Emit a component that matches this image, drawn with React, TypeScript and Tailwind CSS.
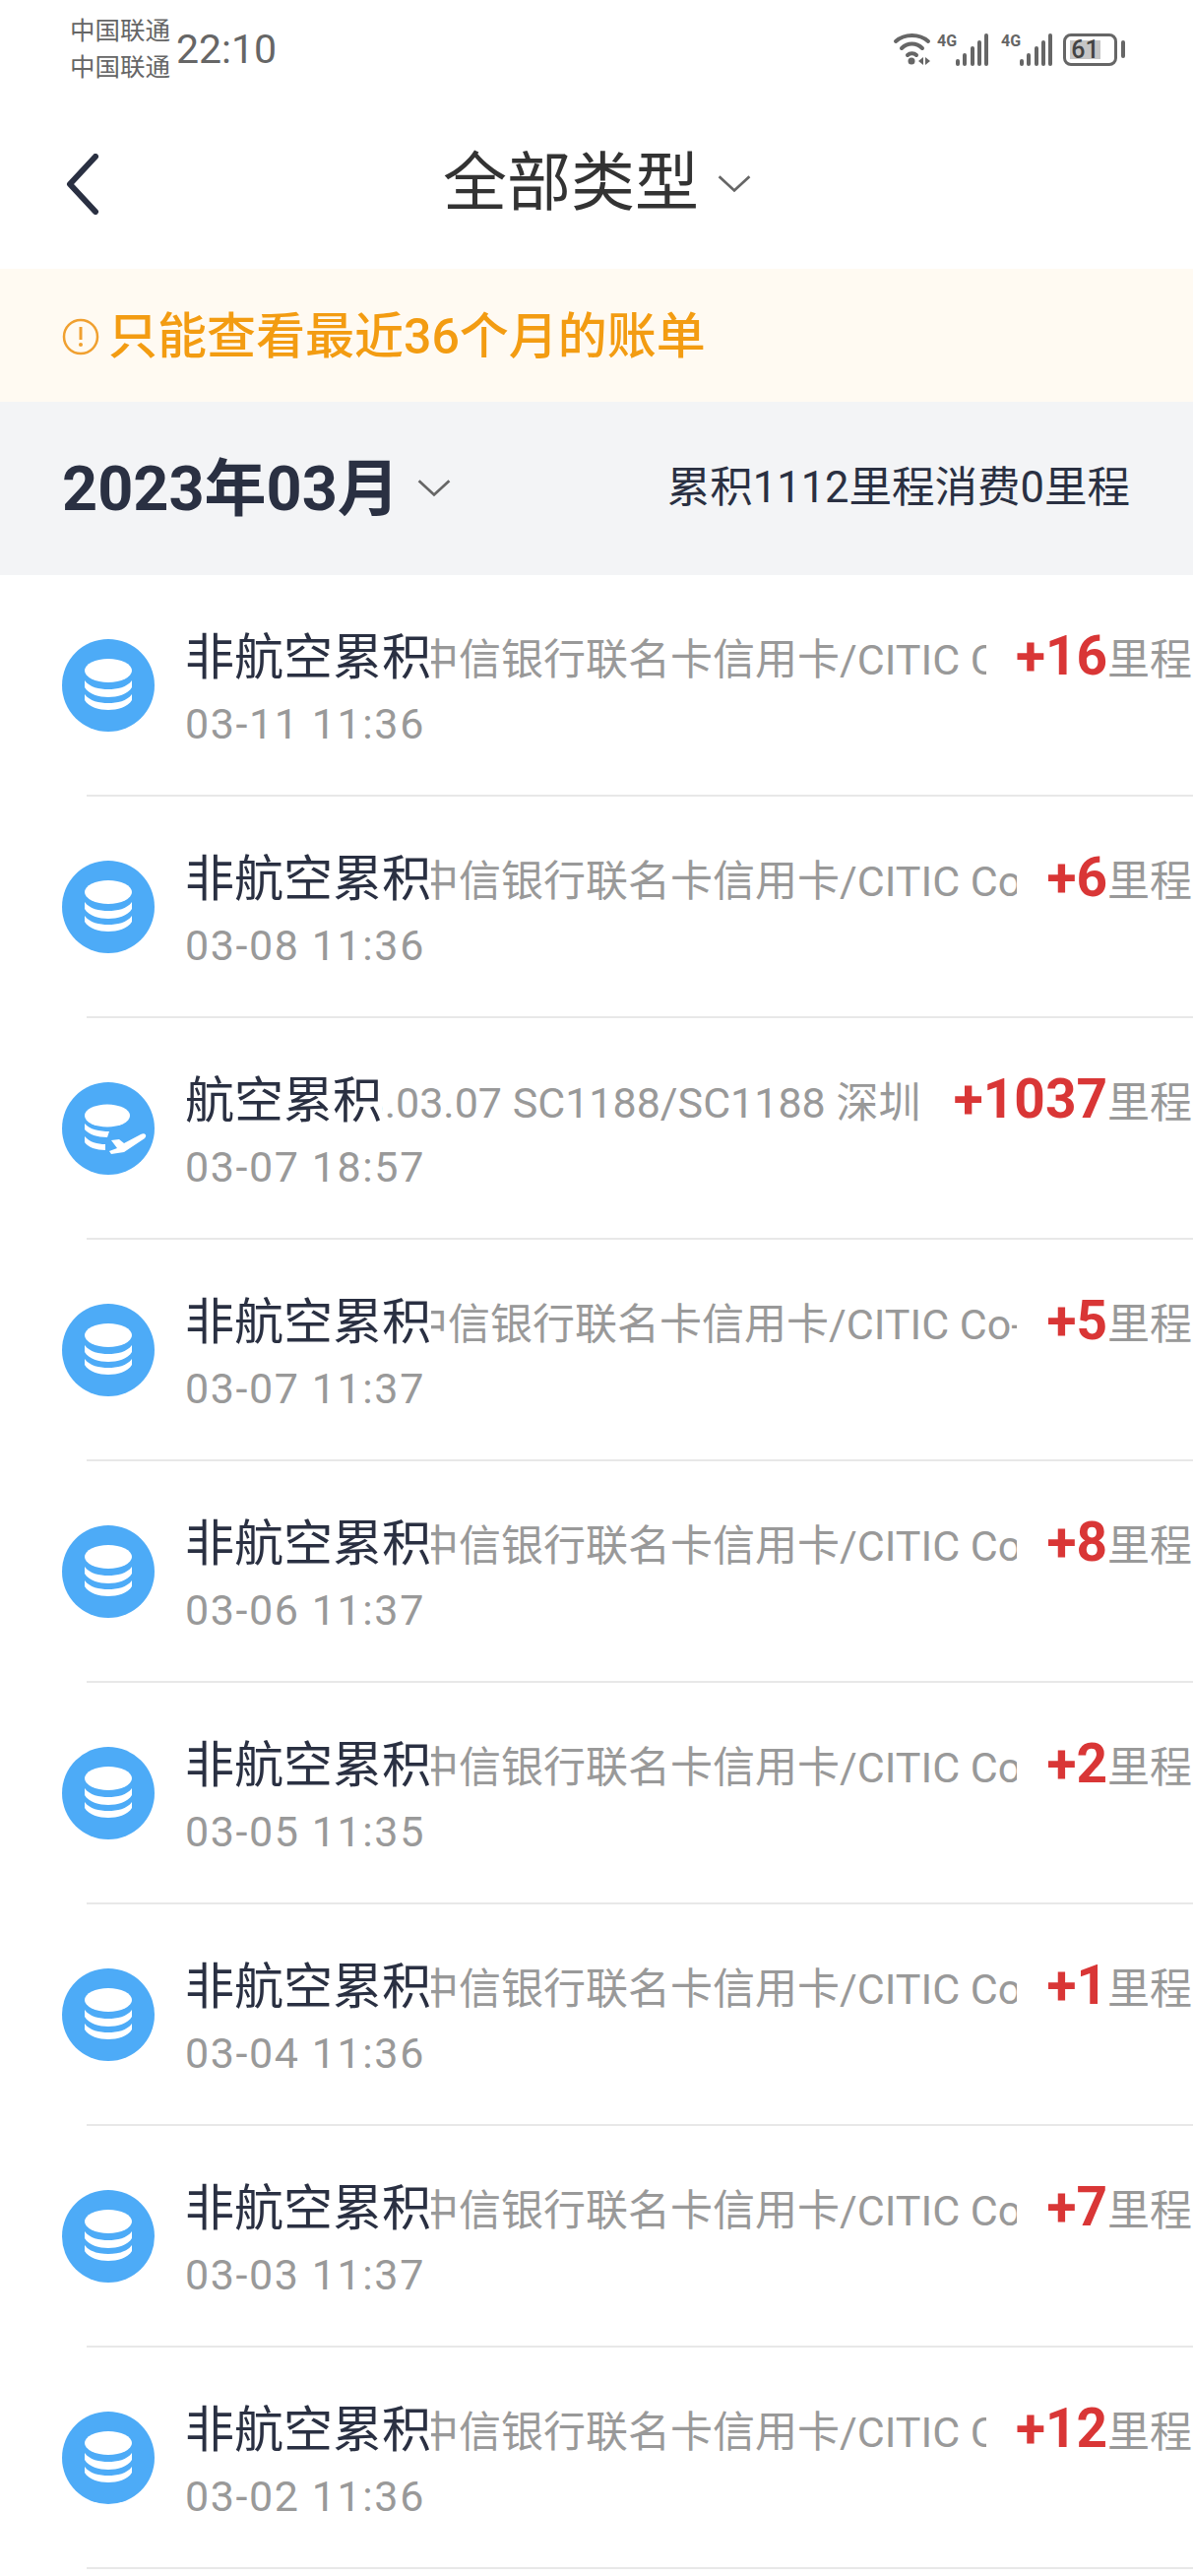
const font = { fontFamily: "Roboto, 'Noto Sans CJK SC', sans-serif" }

type Row = {
  title: string
  detail: string
  shift: number
  amount: string
  time: string
  flight?: boolean
}

const card = "中信银行联名卡信用卡/CITIC Co-branded Credit Card"

const rows: Row[] = [
  { title: "非航空累积", detail: card, shift: -15, amount: "+16", time: "03-11 11:36" },
  { title: "非航空累积", detail: card, shift: -15, amount: "+6", time: "03-08 11:36" },
  { title: "航空累积", detail: "2023.03.07 SC1188/SC1188 深圳 北京首都", shift: -94, amount: "+1037", time: "03-07 18:57", flight: true },
  { title: "非航空累积", detail: card, shift: -26, amount: "+5", time: "03-07 11:37" },
  { title: "非航空累积", detail: card, shift: -15, amount: "+8", time: "03-06 11:37" },
  { title: "非航空累积", detail: card, shift: -15, amount: "+2", time: "03-05 11:35" },
  { title: "非航空累积", detail: card, shift: -15, amount: "+1", time: "03-04 11:36" },
  { title: "非航空累积", detail: card, shift: -15, amount: "+7", time: "03-03 11:37" },
  { title: "非航空累积", detail: card, shift: -15, amount: "+12", time: "03-02 11:36" },
]

function Wifi() {
  return (
    <svg width="40" height="34" viewBox="0 0 40 34" fill="none" className="shrink-0">
      <path d="M3 9C12 1 27 1 36 9" stroke="#666" strokeWidth="4" strokeLinecap="round" />
      <path d="M9 16C15 10 24 10 30 16" stroke="#666" strokeWidth="4" strokeLinecap="round" />
      <path d="M15 23C17.500 20.500 21.500 20.500 24 23" stroke="#666" strokeWidth="4" strokeLinecap="round" />
      <circle cx="19" cy="29" r="3.500" fill="#666" />
      <path d="M31 25V33L26 29Z M33 25V33L38 29Z" fill="#666" />
    </svg>
  )
}

function Signal() {
  return (
    <div className="flex items-start shrink-0">
      <span className="text-[16px] leading-[16px] font-bold text-[#666] w-[19px]" style={font}>4G</span>
      <svg width="34" height="33" viewBox="0 0 34 33" fill="#666">
        <rect x="0" y="26" width="4" height="7" rx="2" />
        <rect x="7" y="20" width="4" height="13" rx="2" />
        <rect x="15" y="13" width="4" height="20" rx="2" />
        <rect x="22" y="7" width="4" height="26" rx="2" />
        <rect x="29" y="0" width="4" height="33" rx="2" />
      </svg>
    </div>
  )
}

function Battery() {
  return (
    <div className="flex items-center gap-[4px] shrink-0">
      <div className="w-[55px] h-[33px] border-[3px] border-[#666] rounded-[8px] p-[4px] flex">
        <div className="w-[31px] bg-[#c6c6c6] flex items-center justify-center">
          <span className="text-[25px] leading-none text-[#444] font-medium" style={font}>61</span>
        </div>
      </div>
      <div className="w-[4px] h-[18px] rounded-full bg-[#666]" />
    </div>
  )
}

function StatusBar() {
  return (
    <div className="h-[100px] flex items-center pl-[71px] pr-[69px]">
      <div className="w-[108px] flex flex-col text-[25.500px] leading-[37px] text-[#666]" style={font}>
        <span>中国联通</span>
        <span>中国联通</span>
      </div>
      <span className="text-[41px] leading-none text-[#666]" style={font}>22:10</span>
      <div className="ml-auto flex items-center">
        <Wifi />
        <div className="ml-[5px] flex gap-[12px]">
          <Signal />
          <Signal />
        </div>
        <div className="ml-[10px]">
          <Battery />
        </div>
      </div>
    </div>
  )
}

function Chevron({ color, width }: { color: string; width: number }) {
  return (
    <svg width={width} height={width * 0.55} viewBox="0 0 32 18" fill="none">
      <path d="M2 2L16 15L30 2" stroke={color} strokeWidth="2.500" />
    </svg>
  )
}

function Header() {
  return (
    <div className="relative h-[173px] flex items-center justify-center">
      <svg width="36" height="62" viewBox="0 0 36 62" fill="none" className="absolute left-[66px] top-[56px]">
        <path d="M31 3L5 31L31 59" stroke="#2a3042" strokeWidth="6" strokeLinecap="round" strokeLinejoin="round" />
      </svg>
      <div className="flex items-center gap-[18px] pl-[2px]">
        <span className="text-[65px] leading-none text-[#333]" style={font}>全部类型</span>
        <Chevron color="#666" width={36} />
      </div>
    </div>
  )
}

function Notice() {
  return (
    <div className="h-[135px] bg-[#fffaf2] flex items-center pl-[63px] pt-[3px] gap-[9px]">
      <svg width="38" height="38" viewBox="0 0 38 38" fill="none" className="shrink-0">
        <circle cx="19" cy="19" r="17" stroke="#f0a030" strokeWidth="2.500" />
        <path d="M19 9V22" stroke="#f0a030" strokeWidth="3" />
        <circle cx="19" cy="27" r="2" fill="#f0a030" />
      </svg>
      <span className="text-[50px] leading-none font-medium text-[#f39c12]" style={font}>只能查看最近36个月的账单</span>
    </div>
  )
}

function MonthBar() {
  return (
    <div className="h-[176px] bg-[#f3f4f6] flex items-center pl-[63px] pr-[64px]">
      <span className="text-[63px] leading-none font-bold text-[#2a3042]" style={font}>2023年03月</span>
      <div className="ml-[17px]">
        <Chevron color="#666" width={36} />
      </div>
      <span className="ml-auto text-[43.500px] leading-none text-[#2a3042]" style={font}>累积1112里程消费0里程</span>
    </div>
  )
}

function CoinIcon({ flight }: { flight?: boolean }) {
  if (flight) {
    return (
      <svg width="94" height="94" viewBox="0 0 94 94" className="shrink-0">
        <circle cx="47" cy="47" r="47" fill="#4dabf7" />
        <ellipse cx="46" cy="34" rx="23" ry="11.500" fill="#fff" />
        <path d="M23 42C28 48 38 50 48 50L46 56C36 56 27 53 23 48Z" fill="#fff" />
        <path d="M23 55C28 61 36 63 44 63L44 69C35 69 26 66 23 61Z" fill="#fff" />
        <path d="M50 59L58 58L63 62L80 53C84 51 87 54 84 57L63 71L50 73L48 70L56 67Z" fill="#fff" />
      </svg>
    )
  }
  return (
    <svg width="94" height="94" viewBox="0 0 94 94" className="shrink-0">
      <circle cx="47" cy="47" r="47" fill="#4dabf7" />
      <ellipse cx="47" cy="32" rx="24" ry="12" fill="#fff" />
      <path d="M23 42C28 49 38 51 47 51C56 51 66 49 71 42V49C67 56 56 59 47 59C38 59 27 56 23 49Z" fill="#fff" />
      <path d="M23 56C28 63 38 65 47 65C56 65 66 63 71 56V62C67 69 56 72 47 72C38 72 27 69 23 62Z" fill="#fff" />
    </svg>
  )
}

function RecordRow({ row }: { row: Row }) {
  return (
    <>
      <div className="h-[223px] flex items-center pl-[63px] pr-[1px] overflow-hidden" style={font}>
        <CoinIcon flight={row.flight} />
        <div className="ml-[31px] flex-1 min-w-0 flex flex-col gap-[15px] pt-[9px]">
          <div className="flex items-baseline">
            <span className="shrink-0 text-[50px] leading-[50px] text-[#2a3042]">{row.title}</span>
            <div className="flex-1 min-w-0 overflow-hidden mr-[30px]">
              <div className="whitespace-nowrap text-[43px] leading-[50px] text-[#999]" style={{ marginLeft: row.shift }}>
                {row.detail}
              </div>
            </div>
            <span className="shrink-0 text-[55px] leading-[50px] font-bold text-[#d93636]">{row.amount}</span>
            <span className="shrink-0 text-[43px] leading-[50px] text-[#999]">里程</span>
          </div>
          <span className="text-[43px] leading-[50px] tracking-[1.600px] text-[#999]">{row.time}</span>
        </div>
      </div>
      <div className="h-[2px] ml-[88px] bg-[#e8e8e8]" />
    </>
  )
}

export default function App() {
  return (
    <div className="w-[1212px] h-[2616px] bg-white overflow-hidden">
      <StatusBar />
      <Header />
      <Notice />
      <MonthBar />
      {rows.map((row, index) => (
        <RecordRow key={index} row={row} />
      ))}
    </div>
  )
}
